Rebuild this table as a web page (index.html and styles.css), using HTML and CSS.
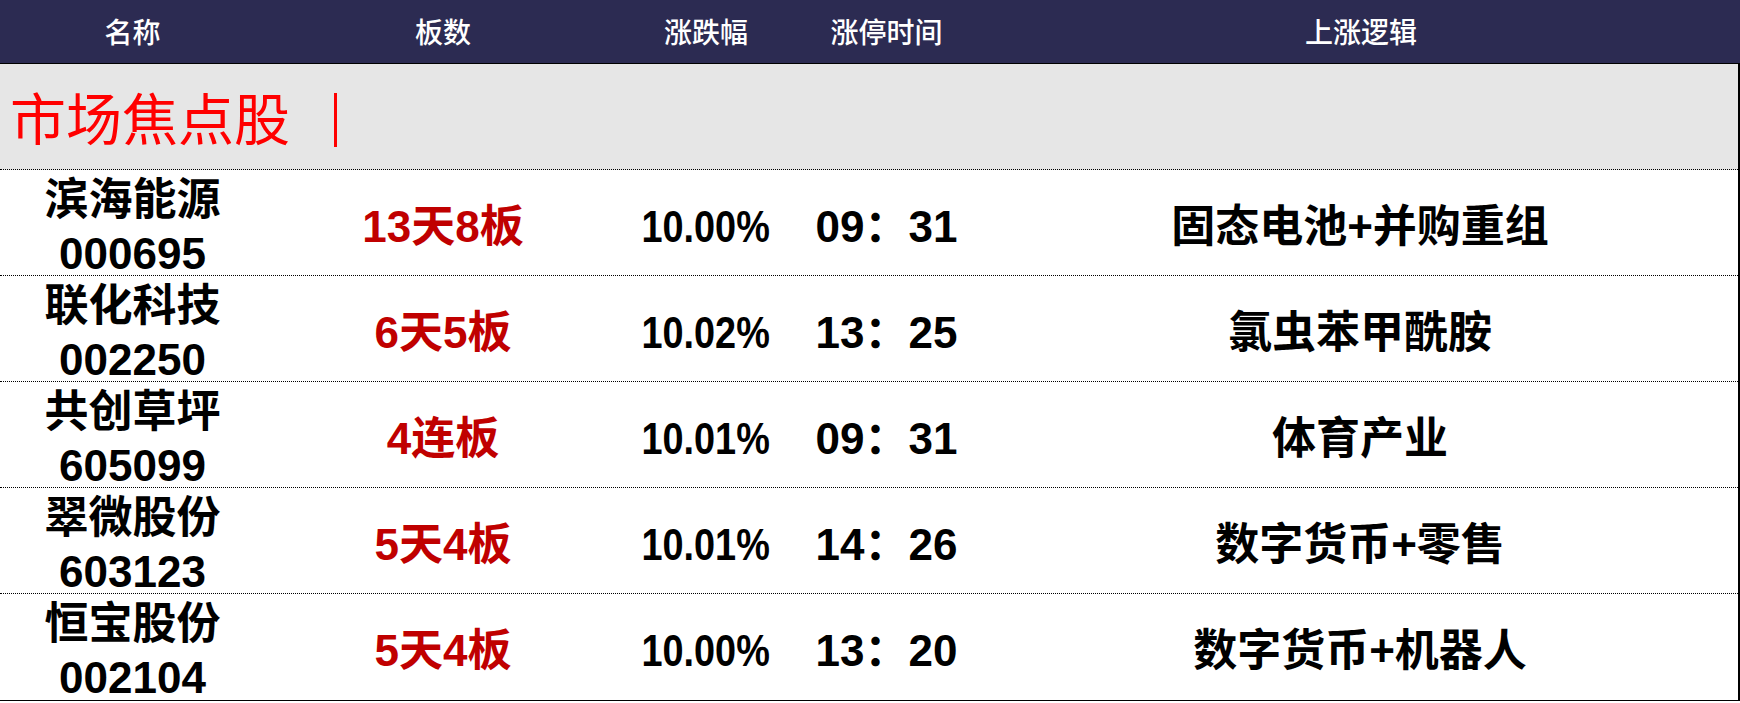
FILE: index.html
```html
<!DOCTYPE html>
<html lang="zh-CN">
<head>
<meta charset="utf-8">
<title>市场焦点股</title>
<link rel="stylesheet" href="styles.css">
</head>
<body>
<div class="board">
  <div class="head grid">
    <div class="hcell">名称</div>
    <div class="hcell">板数</div>
    <div class="hcell">涨跌幅</div>
    <div class="hcell">涨停时间</div>
    <div class="hcell">上涨逻辑</div>
  </div>
  <div class="body">
    <div class="section"><span class="title">市场焦点股</span><span class="bar"></span></div>
    <div class="row grid">
      <div class="cell name">滨海能源<br>000695</div>
      <div class="cell boards">13天8板</div>
      <div class="cell pct"><span>10.00%</span></div>
      <div class="cell time">09：31</div>
      <div class="cell logic">固态电池+并购重组</div>
    </div>
    <div class="row grid">
      <div class="cell name">联化科技<br>002250</div>
      <div class="cell boards">6天5板</div>
      <div class="cell pct"><span>10.02%</span></div>
      <div class="cell time">13：25</div>
      <div class="cell logic">氯虫苯甲酰胺</div>
    </div>
    <div class="row grid">
      <div class="cell name">共创草坪<br>605099</div>
      <div class="cell boards">4连板</div>
      <div class="cell pct"><span>10.01%</span></div>
      <div class="cell time">09：31</div>
      <div class="cell logic">体育产业</div>
    </div>
    <div class="row grid">
      <div class="cell name">翠微股份<br>603123</div>
      <div class="cell boards">5天4板</div>
      <div class="cell pct"><span>10.01%</span></div>
      <div class="cell time">14：26</div>
      <div class="cell logic">数字货币+零售</div>
    </div>
    <div class="row grid last">
      <div class="cell name">恒宝股份<br>002104</div>
      <div class="cell boards">5天4板</div>
      <div class="cell pct"><span>10.00%</span></div>
      <div class="cell time">13：20</div>
      <div class="cell logic">数字货币+机器人</div>
    </div>
  </div>
</div>
</body>
</html>
```
FILE: styles.css
```css
html, body {
  margin: 0;
  padding: 0;
  background: #ffffff;
}

.board {
  width: 1740px;
  font-family: "Liberation Sans", "Noto Sans CJK SC", sans-serif;
}

.grid {
  display: grid;
  grid-template-columns: 265px 356px 170px 191px 1fr;
}

.head {
  box-sizing: border-box;
  padding-top: 4px;
  background: #2c2b52;
  border-bottom: 1px solid #000;
  height: 64px;
  align-items: center;
}

.hcell {
  color: #ffffff;
  font-size: 28px;
  font-weight: 500;
  text-align: center;
  line-height: 32px;
}

.body {
  border-right: 2px solid #000;
  border-bottom: 1px solid #000;
}

.section {
  height: 106px;
  box-sizing: border-box;
  background: #e6e6e6;
  border-bottom: 1px dotted #000;
  padding: 9px 0 0 10px;
  display: flex;
  align-items: center;
}

.title {
  color: #ff0000;
  font-family: "Liberation Serif", "Noto Sans CJK SC", serif;
  font-size: 56px;
  font-weight: 400;
  line-height: 60px;
}

.bar {
  width: 3px;
  height: 54px;
  background: #ff0000;
  margin-left: 44px;
  margin-top: -2px;
}

.row {
  height: 106px;
  box-sizing: border-box;
  padding-top: 8px;
  border-bottom: 1px dotted #000;
  grid-template-rows: minmax(0, 1fr);
  align-items: center;
}

.row.last {
  border-bottom: none;
}

.cell {
  text-align: center;
  font-size: 44px;
  font-weight: 700;
  color: #000;
  line-height: 54px;
  white-space: nowrap;
}

.boards {
  color: #c00000;
}

.pct span {
  display: inline-block;
  transform: scaleX(0.86);
  transform-origin: center;
}
```
